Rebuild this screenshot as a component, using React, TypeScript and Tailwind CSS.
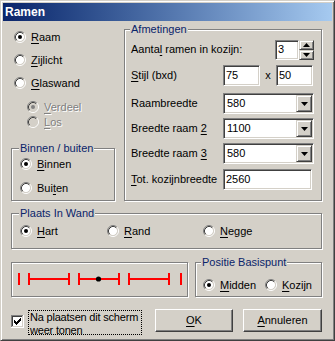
import React from "react";

const sunken =
  "bg-white border border-t-[#808080] border-l-[#808080] border-b-white border-r-white shadow-[inset_1px_1px_0_#404040,inset_-1px_-1px_0_#d4d0c8]";
const raised =
  "bg-[#d4d0c8] border border-t-white border-l-white border-b-[#404040] border-r-[#404040] shadow-[inset_-1px_-1px_0_#808080]";
const raisedInner =
  "bg-[#d4d0c8] border border-t-[#d4d0c8] border-l-[#d4d0c8] border-b-[#404040] border-r-[#404040] shadow-[inset_1px_1px_0_#fff,inset_-1px_-1px_0_#808080]";
const etched = "border border-[#808080] shadow-[1px_1px_0_#fff,inset_1px_1px_0_#fff]";

const U = ({ children }: { children: React.ReactNode }) => (
  <span className="underline underline-offset-[2px]">{children}</span>
);

function Radio({ checked = false, disabled = false }) {
  return (
    <svg width="12" height="12" viewBox="0 0 12 12" className="shrink-0">
      <circle cx="6" cy="6" r="4.2" fill={disabled ? "#d4d0c8" : "#fff"} />
      <path d="M2.11 9.89A5.5 5.5 0 0 1 9.89 2.11" fill="none" stroke="#808080" />
      <path d="M9.89 2.11A5.5 5.5 0 0 1 2.11 9.89" fill="none" stroke="#fff" />
      <path d="M2.82 9.18A4.5 4.5 0 0 1 9.18 2.82" fill="none" stroke="#404040" />
      <path d="M9.18 2.82A4.5 4.5 0 0 1 2.82 9.18" fill="none" stroke="#d4d0c8" />
      {checked && <circle cx="6" cy="6" r="2" fill={disabled ? "#808080" : "#000"} />}
    </svg>
  );
}

function Option({
  children,
  checked,
  disabled,
  className = "",
}: {
  children: React.ReactNode;
  checked?: boolean;
  disabled?: boolean;
  className?: string;
}) {
  return (
    <div className={`flex items-center h-[14px] gap-[5px] ${className}`}>
      <Radio checked={checked} disabled={disabled} />
      <span className={disabled ? "text-[#808080] [text-shadow:1px_1px_0_#fff]" : ""}>{children}</span>
    </div>
  );
}

function Group({
  title,
  labelLeft,
  className = "",
  children,
}: {
  title?: string;
  labelLeft?: string;
  className?: string;
  children?: React.ReactNode;
}) {
  return (
    <div className={`relative ${etched} ${className}`}>
      {title && (
        <span className={`absolute -top-[7px] ${labelLeft} bg-[#d4d0c8] px-[1px] leading-[13px] text-[#0a246a]`}>
          {title}
        </span>
      )}
      {children}
    </div>
  );
}

const Arrow = ({ up = false }) => (
  <svg width="7" height="4" viewBox="0 0 7 4">
    <path d={up ? "M3.5 0L7 4H0Z" : "M0 0H7L3.5 4Z"} fill="#000" />
  </svg>
);

function Combo({ value }: { value: string }) {
  return (
    <div className={`w-[91px] h-[21px] flex items-center ${sunken} p-[1px]`}>
      <span className="flex-1 pl-[2px]">{value}</span>
      <div className={`w-[16px] h-[17px] flex items-center justify-center ${raisedInner}`}>
        <Arrow />
      </div>
    </div>
  );
}

function CheckBox() {
  const rows: [number, number][][] = [
    [[6, 1]],
    [[5, 2]],
    [[0, 1], [4, 3]],
    [[0, 2], [3, 3]],
    [[0, 5]],
    [[1, 3]],
    [[2, 1]],
  ];
  return (
    <svg width="13" height="13" viewBox="0 0 13 13" shapeRendering="crispEdges" className="shrink-0">
      <rect x="0" y="0" width="13" height="13" fill="#fff" />
      <rect x="0" y="0" width="12" height="1" fill="#808080" />
      <rect x="0" y="0" width="1" height="12" fill="#808080" />
      <rect x="1" y="1" width="10" height="1" fill="#404040" />
      <rect x="1" y="1" width="1" height="10" fill="#404040" />
      <rect x="1" y="11" width="11" height="1" fill="#d4d0c8" />
      <rect x="11" y="1" width="1" height="11" fill="#d4d0c8" />
      {rows.map((runs, r) =>
        runs.map(([x, w], i) => <rect key={`${r}-${i}`} x={3 + x} y={3 + r} width={w} height="1" fill="#000" />)
      )}
    </svg>
  );
}

function Diagram() {
  const segs = [16, 66, 116];
  return (
    <svg width="175" height="33" viewBox="0 0 175 33">
      <rect x="6" y="10" width="2" height="12" fill="#ff0000" />
      <rect x="168" y="10" width="2" height="12" fill="#ff0000" />
      {segs.map((x) => (
        <g key={x} fill="#ff0000">
          <rect x={x} y="10" width="2" height="12" />
          <rect x={x + 40} y="10" width="2" height="12" />
          <rect x={x} y="15" width="42" height="2" />
        </g>
      ))}
      <circle cx="86.5" cy="16" r="2.6" fill="#000" />
    </svg>
  );
}

export default function App() {
  return (
    <div className="w-[335px] h-[341px] bg-[#d4d0c8] border border-t-[#d4d0c8] border-l-[#d4d0c8] border-r-[#404040] border-b-[#404040] shadow-[inset_1px_1px_0_#fff,inset_-1px_-1px_0_#808080] p-[2px] text-[11px] leading-[13px] text-black font-['Liberation_Sans',Arial,sans-serif]">
      <div className="h-[18px] bg-linear-to-r from-[#0a246a] to-[#a6caf0] flex items-center pl-[2px] text-white font-bold text-[12px]">
        Ramen
      </div>

      <div className="pl-[8px]">
        {/* top section */}
        <div className="flex mt-[8px] h-[172px]">
          <div className="w-[104px] flex flex-col">
            <div className="pl-[3px] pt-[1px] flex flex-col">
              <Option checked>
                <U>R</U>aam
              </Option>
              <Option className="mt-[9px]">
                <U>Z</U>ijlicht
              </Option>
              <Option className="mt-[9px]">
                <U>G</U>laswand
              </Option>
              <Option checked disabled className="mt-[10px] ml-[13px]">
                <U>V</U>erdeel
              </Option>
              <Option disabled className="mt-[1px] ml-[13px]">
                <U>L</U>os
              </Option>
            </div>
            <Group title="Binnen / buiten" labelLeft="left-[7px]" className="mt-[19px] h-[53px] pl-[8px] pt-[8px]">
              <Option checked>
                <U>B</U>innen
              </Option>
              <Option className="mt-[10px]">
                Bui<U>t</U>en
              </Option>
            </Group>
          </div>

          <Group title="Afmetingen" labelLeft="left-[5px]" className="ml-[9px] w-[198px] pl-[6px] pt-[9px]">
            <div className="flex items-center h-[21px]">
              <span className="w-[144px]">
                Aanta<U>l</U> ramen in kozijn:
              </span>
              <div className={`w-[24px] h-[20px] flex items-center pl-[2px] ${sunken}`}>3</div>
              <div className="flex flex-col w-[15px] h-[20px]">
                <div className={`h-[10px] flex items-center justify-center ${raisedInner}`}>
                  <Arrow up />
                </div>
                <div className={`h-[10px] flex items-center justify-center ${raisedInner}`}>
                  <Arrow />
                </div>
              </div>
            </div>
            <div className="flex items-center h-[21px] mt-[5px]">
              <span className="w-[92px]">
                <U>S</U>tijl (bxd)
              </span>
              <div className={`w-[37px] h-[21px] flex items-center pl-[2px] ${sunken}`}>75</div>
              <span className="w-[16px] text-center">x</span>
              <div className={`w-[37px] h-[21px] flex items-center pl-[2px] ${sunken}`}>50</div>
            </div>
            <div className="flex items-center h-[21px] mt-[7px]">
              <span className="w-[92px]">Raambreedte</span>
              <Combo value="580" />
            </div>
            <div className="flex items-center h-[21px] mt-[4px]">
              <span className="w-[92px]">
                Breedte raam <U>2</U>
              </span>
              <Combo value="1100" />
            </div>
            <div className="flex items-center h-[21px] mt-[4px]">
              <span className="w-[92px]">
                Breedte raam <U>3</U>
              </span>
              <Combo value="580" />
            </div>
            <div className="flex items-center h-[21px] mt-[5px]">
              <span className="w-[92px]">
                <U>T</U>ot. kozijnbreedte
              </span>
              <div className={`w-[89px] h-[21px] flex items-center pl-[2px] ${sunken}`}>2560</div>
            </div>
          </Group>
        </div>

        {/* plaats in wand */}
        <Group title="Plaats In Wand" labelLeft="left-[7px]" className="mt-[12px] w-[311px] h-[36px] pl-[8px] pt-[10px]">
          <div className="flex">
            <Option checked className="w-[87px]">
              <U>H</U>art
            </Option>
            <Option className="w-[96px]">
              <U>R</U>and
            </Option>
            <Option>
              <U>N</U>egge
            </Option>
          </div>
        </Group>

        {/* diagram + positie */}
        <div className="flex mt-[13px] h-[35px]">
          <div className={`w-[177px] ${etched}`}>
            <Diagram />
          </div>
          <Group title="Positie Basispunt" labelLeft="left-[5px]" className="ml-[7px] w-[127px] pl-[7px] pt-[15px]">
            <div className="flex">
              <Option checked className="w-[62px]">
                <U>M</U>idden
              </Option>
              <Option>
                <U>K</U>ozijn
              </Option>
            </div>
          </Group>
        </div>

        {/* bottom */}
        <div className="flex items-start mt-[12px]">
          <div className="mt-[6px]">
            <CheckBox />
          </div>
          <div className="ml-[4px] mt-[1px] w-[114px] h-[25px] border border-dotted border-black pl-[1px] whitespace-nowrap tracking-[-0.2px]">
            Na plaatsen dit scherm
            <br />
            weer tonen
          </div>
          <button className={`ml-[13px] w-[78px] ${raised} h-[23px] flex items-center justify-center`}>
            <U>O</U>K
          </button>
          <button className={`ml-[10px] w-[79px] ${raised} h-[23px] flex items-center justify-center`}>
            <U>A</U>nnuleren
          </button>
        </div>
      </div>
    </div>
  );
}
